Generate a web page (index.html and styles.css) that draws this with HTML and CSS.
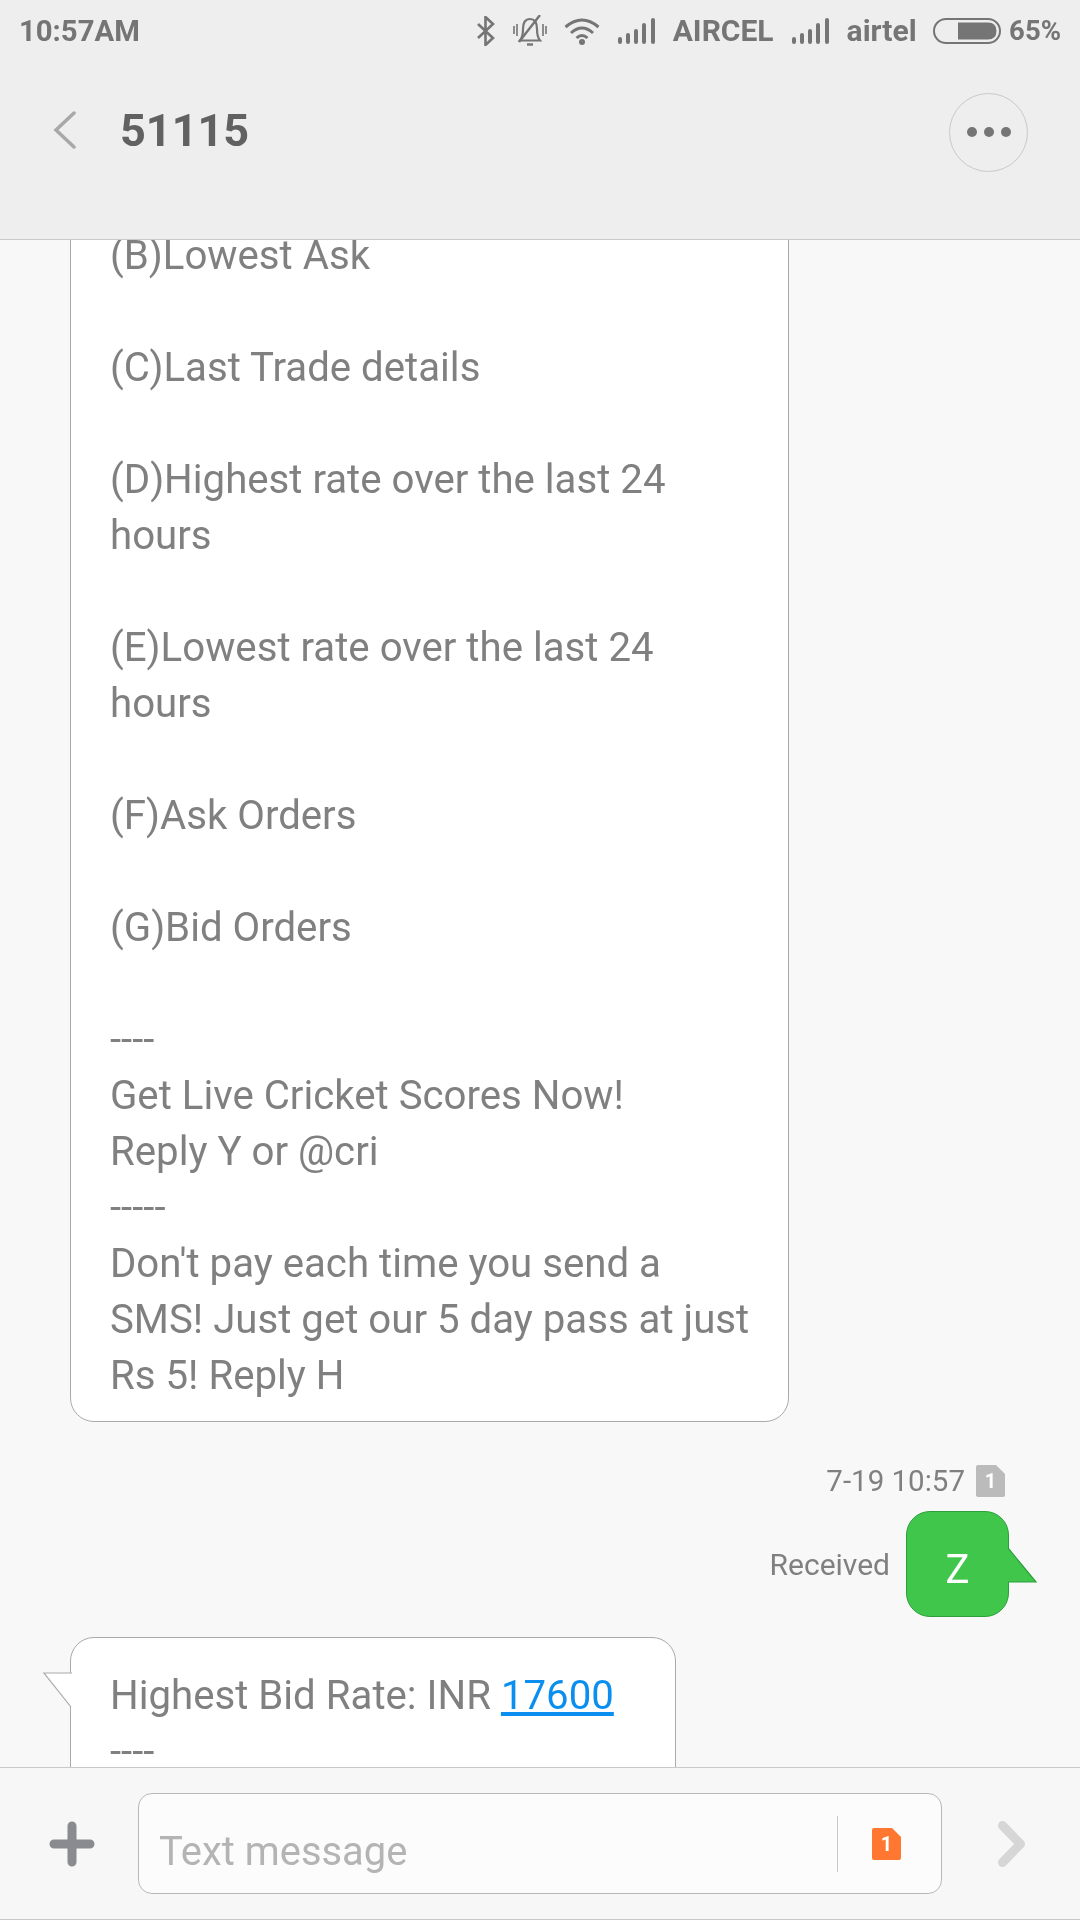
FILE: index.html
```html
<!DOCTYPE html>
<html lang="en">
<head>
<meta charset="utf-8">
<title>51115</title>
<link rel="stylesheet" href="styles.css">
</head>
<body>
<div class="app">
  <header class="top">
    <div class="status">
      <span class="status-time">10:57AM</span>
      <div class="status-right">
        <svg class="ic-bt" width="20" height="30" viewBox="0 0 20 30"><path d="M2 8 L17 22 L9.5 29 V1 L17 8 L2 22" fill="none" stroke="#757575" stroke-width="2.6"/></svg>
        <svg class="ic-bell" width="34" height="32" viewBox="0 0 34 32"><path d="M7 25.500 Q10 22 10 14 Q10 4 17 4 Q24 4 24 14 Q24 22 27 25.500 Z" fill="none" stroke="#757575" stroke-width="2.200"/><path d="M14 29.500 H20" stroke="#757575" stroke-width="2.400"/><path d="M6 27 L27 0" stroke="#757575" stroke-width="2.400"/><path d="M1 11 V19 M4 9 V21 M33 11 V19 M30 9 V21" stroke="#757575" stroke-width="1.600"/></svg>
        <svg class="ic-wifi" width="36" height="27" viewBox="0 0 36 27"><path d="M1.500 9 Q18 -5 34.500 9 M7 15 Q18 5 29 15 M12.500 20 Q18 15 23.500 20" fill="none" stroke="#757575" stroke-width="3"/><circle cx="18" cy="24" r="3" fill="#757575"/></svg>
        <svg class="ic-sig" width="37" height="26" viewBox="0 0 37 26"><rect x="0" y="19" width="4" height="7" rx="2" fill="#757575"/><rect x="8" y="15" width="4" height="11" rx="2" fill="#757575"/><rect x="16" y="11" width="4" height="15" rx="2" fill="#757575"/><rect x="24" y="5" width="4" height="21" rx="2" fill="#757575"/><rect x="33" y="0" width="4" height="26" rx="2" fill="#757575"/></svg>
        <span class="status-label label-aircel">AIRCEL</span>
        <svg class="ic-sig" width="37" height="26" viewBox="0 0 37 26"><rect x="0" y="19" width="4" height="7" rx="2" fill="#757575"/><rect x="8" y="15" width="4" height="11" rx="2" fill="#757575"/><rect x="16" y="11" width="4" height="15" rx="2" fill="#757575"/><rect x="24" y="5" width="4" height="21" rx="2" fill="#757575"/><rect x="33" y="0" width="4" height="26" rx="2" fill="#757575"/></svg>
        <span class="status-label label-airtel">airtel</span>
        <svg class="ic-bat" width="68" height="26" viewBox="0 0 68 26"><rect x="1" y="1" width="66" height="24" rx="12" fill="none" stroke="#757575" stroke-width="2"/><path d="M25 4.500 H55 Q63.500 4.500 63.500 13 Q63.500 21.500 55 21.500 H25 Z" fill="#757575"/></svg>
        <span class="status-label label-pct">65%</span>
      </div>
    </div>
    <div class="title-bar">
      <svg class="back" width="24" height="38" viewBox="0 0 24 38"><path d="M21 2 L3 19 L21 36" fill="none" stroke="#a8a8a8" stroke-width="3.500" stroke-linecap="round"/></svg>
      <h1 class="title">51115</h1>
      <div class="more"><span class="dot"></span><span class="dot"></span><span class="dot"></span></div>
    </div>
  </header>

  <main class="thread">
    <div class="bubble bubble-long">(B)Lowest Ask

(C)Last Trade details

(D)Highest rate over the last 24 hours

(E)Lowest rate over the last 24 hours

(F)Ask Orders

(G)Bid Orders

----
Get Live Cricket Scores Now!
Reply Y or @cri
-----
Don't pay each time you send a SMS! Just get our 5 day pass at just Rs 5! Reply H</div>

    <div class="meta">
      <span>7-19 10:57</span>
      <svg class="sim" width="29" height="32" viewBox="0 0 29 32"><path d="M2 0 H20 L29 9 V30 Q29 32 27 32 H2 Q0 32 0 30 V2 Q0 0 2 0 Z" fill="#bbbbbb"/><text x="14.500" y="23" class="sim-num">1</text></svg>
    </div>
    <div class="sent-row">
      <span class="sent-status">Received</span>
      <div class="sent-bubble">Z
        <svg class="sent-tail" width="30" height="38" viewBox="0 0 30 38"><path d="M0 1 L28 35 H0" fill="#41c64c" stroke="#2b9f3c" stroke-width="1.200"/></svg>
      </div>
    </div>

    <div class="bubble bubble-short">Highest Bid Rate: INR <a class="num" href="#">17600</a>
----
<svg class="recv-tail" width="30" height="38" viewBox="0 0 30 38"><path d="M30 1 H2 L29 35" fill="#fff" stroke="#aaaaaa" stroke-width="1.200"/></svg></div>
  </main>

  <footer class="composer">
    <svg class="plus" width="46" height="46" viewBox="0 0 46 46"><path d="M23 5 V41 M5 23 H41" stroke="#8a8b90" stroke-width="9" stroke-linecap="round"/></svg>
    <div class="input">
      <span class="placeholder">Text message</span>
      <span class="divider"></span>
      <svg class="sim sim-send" width="29" height="32" viewBox="0 0 29 32"><path d="M2 0 H20 L29 9 V30 Q29 32 27 32 H2 Q0 32 0 30 V2 Q0 0 2 0 Z" fill="#ff7730"/><text x="14.500" y="23" class="sim-num">1</text></svg>
    </div>
    <svg class="send" width="28" height="46" viewBox="0 0 28 46"><path d="M4.500 4.500 L22.500 23 L4.500 41.500" fill="none" stroke="#d6d6d6" stroke-width="9" stroke-linecap="round" stroke-linejoin="round"/></svg>
  </footer>
</div>
</body>
</html>
```
FILE: styles.css
```css
* { box-sizing: border-box; }
html, body { margin: 0; padding: 0; }
body { font-family: Roboto, "Liberation Sans", sans-serif; background: #f8f8f8; }
.app { width: 1080px; height: 1920px; display: flex; flex-direction: column; overflow: hidden; will-change: transform; }

.top { height: 240px; flex: none; background: #eeeeee; border-bottom: 1.500px solid #c9c9c9; position: relative; z-index: 2; }
.status { height: 62px; display: flex; align-items: center; justify-content: space-between; padding: 0 19px 0 19px; color: #757575; font-weight: 700; font-size: 30px; }
.status-time { line-height: 60px; font-size: 29.300px; }
.status-right { display: flex; align-items: center; }
.status-label { line-height: 60px; }
.ic-bt { margin-right: 17px; }
.ic-bell { margin-right: 17px; }
.ic-wifi { margin-right: 18px; }
.label-aircel { margin: 0 18px; }
.label-airtel { margin: 0 16px 0 18px; }
.label-pct { margin-left: 8.500px; font-size: 27.500px; }

.title-bar { height: 130px; display: flex; align-items: center; padding: 6px 52px 0 53px; }
.back { flex: none; }
.title { margin: 0 0 0 43px; flex: 1; font-size: 45px; font-weight: 700; color: #616161; }
.more { width: 79px; height: 79px; margin-top: 4px; border: 1.500px solid #c9c9c9; border-radius: 50%; display: flex; align-items: center; justify-content: center; gap: 7px; }
.dot { width: 10px; height: 10px; border-radius: 50%; background: #757575; }

.thread { flex: 1; min-height: 0; overflow: hidden; display: flex; flex-direction: column; background: #f8f8f8; }
.bubble { position: relative; flex: none; align-self: flex-start; margin-left: 70px; background: #fff; border: 1.200px solid #aaaaaa; border-radius: 24px; padding: 30px 30px 17px 39px; font-size: 40.200px; line-height: 56px; color: #808080; white-space: pre-wrap; }
.bubble-long { width: 719px; margin-top: -43px; }
.bubble-short { width: 606px; min-height: 320px; margin-top: 20px; }
.num { color: #0a8ff0; text-decoration: underline; }
.recv-tail { position: absolute; left: -29px; top: 34px; }

.meta { flex: none; display: flex; justify-content: flex-end; align-items: center; gap: 11px; margin-top: 42px; padding-right: 75px; font-size: 29.500px; line-height: 34px; color: #808080; }
.sim { flex: none; }
.sim-num { font-family: Roboto, sans-serif; font-size: 20px; font-weight: 700; fill: #fff; text-anchor: middle; }

.sent-row { flex: none; display: flex; justify-content: flex-end; align-items: center; gap: 16px; margin-top: 13px; padding-right: 71px; }
.sent-status { font-size: 30px; color: #808080; }
.sent-bubble { position: relative; width: 103px; height: 106px; padding-top: 10px; background: #41c64c; border: 1.200px solid #2b9f3c; border-radius: 24px; display: flex; align-items: center; justify-content: center; color: #fff; font-size: 40px; }
.sent-tail { position: absolute; left: 101px; top: 35px; }

.composer { position: relative; z-index: 2; flex: none; height: 153px; background: #f7f7f7; border-top: 1.500px solid #c9c9c9; border-bottom: 1.500px solid #c9c9c9; display: flex; align-items: center; padding-left: 49px; }
.plus { flex: none; }
.input { margin-left: 43px; width: 804px; height: 101px; border: 1.500px solid #b8b8b8; border-radius: 14px; background: #fcfcfc; display: flex; align-items: center; padding-left: 20px; }
.placeholder { flex: 1; padding-top: 15px; font-size: 39.900px; color: #b4b4b4; }
.divider { width: 1.500px; height: 56px; background: #c9c9c9; }
.sim-send { margin: 0 40px 0 34px; }
.send { flex: none; margin-left: 56px; }
```
